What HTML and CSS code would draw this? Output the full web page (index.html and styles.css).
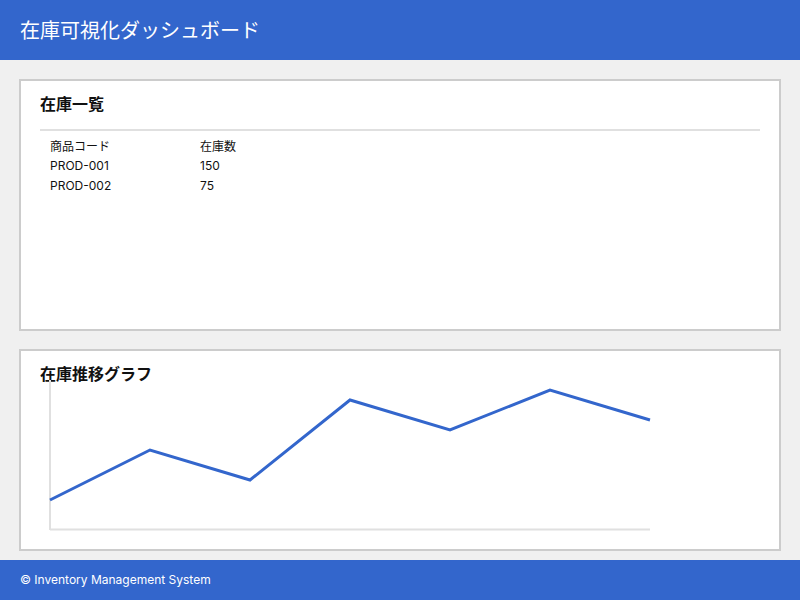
FILE: index.html
```html
<!DOCTYPE html>
<html lang="ja">
<head>
<meta charset="utf-8">
<title>在庫可視化ダッシュボード</title>
<link rel="stylesheet" href="styles.css">
</head>
<body>
<header class="topbar">在庫可視化ダッシュボード</header>
<main class="main">
  <section class="card card-list">
    <h2 class="card-title">在庫一覧</h2>
    <table class="stock-table">
      <thead>
        <tr><th>商品コード</th><th>在庫数</th></tr>
      </thead>
      <tbody>
        <tr><td>PROD-001</td><td>150</td></tr>
        <tr><td>PROD-002</td><td>75</td></tr>
      </tbody>
    </table>
  </section>
  <section class="card card-chart">
    <h2 class="card-title">在庫推移グラフ</h2>
    <svg class="chart" width="600" height="150" viewBox="0 0 600 150">
      <line class="axis" x1="0" y1="0" x2="0" y2="150"></line>
      <line class="axis" x1="0" y1="149.5" x2="600" y2="149.5"></line>
      <polyline class="series" points="0,120 100,70 200,100 300,20 400,50 500,10 600,40"></polyline>
    </svg>
  </section>
</main>
<footer class="footer">© Inventory Management System</footer>
</body>
</html>
```
FILE: styles.css
```css
* { box-sizing: border-box; }
html, body {
  margin: 0;
  padding: 0;
}
body {
  width: 800px;
  height: 600px;
  background: #f0f0f0;
  font-family: Inter, "Noto Sans CJK JP", sans-serif;
  color: #111;
  overflow: hidden;
}
.topbar {
  height: 60px;
  background: #3366cc;
  color: #ffffff;
  font-family: "Noto Sans CJK JP", sans-serif;
  font-size: 20px;
  line-height: 60px;
  padding-left: 20px;
}
.main {
  height: 500px;
  padding: 19px 19px 0;
  display: flex;
  flex-direction: column;
  gap: 18px;
}
.card {
  background: #ffffff;
  border: 2px solid #cccccc;
  padding: 12px 19px;
}
.card-list { height: 252px; }
.card-chart { height: 202px; }
.card-title {
  margin: 0;
  font-family: "Noto Sans CJK JP", sans-serif;
  font-size: 16px;
  font-weight: bold;
  line-height: 20px;
  color: #111;
}
.stock-table {
  margin-top: 16px;
  width: 100%;
  border-collapse: collapse;
  border-top: 2px solid #e0e0e0;
  font-size: 12px;
}
.stock-table thead tr:first-child th { padding-top: 5px; }
.stock-table th,
.stock-table td {
  text-align: left;
  font-weight: normal;
  height: 20px;
  padding: 0 10px;
  line-height: 20px;
}
.stock-table th:first-child,
.stock-table td:first-child { width: 150px; }
.stock-table th { font-family: "Noto Sans CJK JP", sans-serif; }
.stock-table thead th { height: 25px; }
.chart {
  display: block;
  margin: -3px 0 0 10px;
  overflow: visible;
}
.axis {
  stroke: #e0e0e0;
  stroke-width: 2;
}
.series {
  fill: none;
  stroke: #3366cc;
  stroke-width: 3;
}
.footer {
  height: 40px;
  background: #3366cc;
  color: #ffffff;
  font-size: 12px;
  line-height: 40px;
  padding-left: 20px;
}
```
